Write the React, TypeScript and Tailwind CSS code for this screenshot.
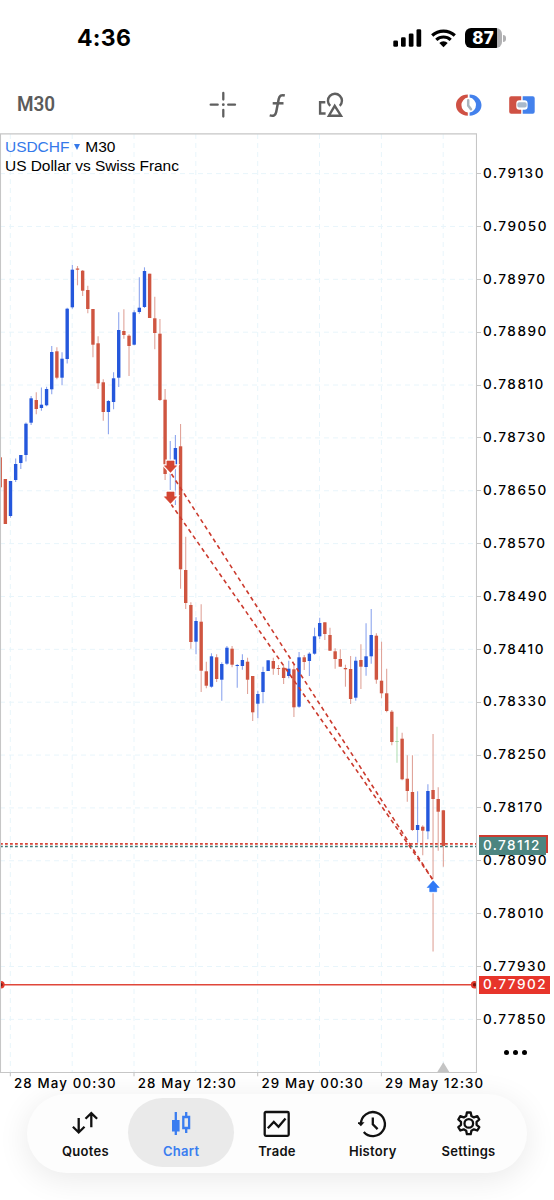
import type { ReactNode } from "react";

// [direction, body top, body bottom, high, low]
type Candle = ["u" | "d" | "n", number, number, number, number];

const CANDLE_STEP = 5.153;
const FIRST_X = 0.2;

const candles: Candle[] = [
  ["d", 457.3, 487.3, 457.3, 487.3],
  ["d", 479, 524, 479, 524],
  ["u", 481, 516, 481, 517.7],
  ["u", 464, 480, 458.5, 482],
  ["u", 455, 463, 455, 469],
  ["u", 423.7, 455, 422.5, 461.5],
  ["u", 398.3, 422.7, 396, 425],
  ["d", 400, 409, 392.3, 414.3],
  ["u", 404.7, 408, 387.5, 410.7],
  ["u", 389, 405.3, 386.7, 406.3],
  ["u", 352, 389.3, 346, 394.3],
  ["d", 351.3, 377.7, 347.3, 379.3],
  ["u", 358.7, 377.7, 352.3, 385.3],
  ["u", 308.7, 359, 307.7, 363.5],
  ["u", 269.7, 307.3, 265, 308.7],
  ["d", 268.5, 269.7, 266, 285.3],
  ["d", 270.7, 290.7, 270, 296],
  ["d", 290, 309, 285.7, 313.3],
  ["d", 309, 344.7, 309, 357.3],
  ["d", 343.3, 383.3, 336.3, 389],
  ["d", 382.3, 412, 379.3, 420.7],
  ["u", 401, 412, 400, 434.3],
  ["u", 378.3, 402, 372.3, 409.3],
  ["u", 330, 377.7, 312.3, 387],
  ["d", 331, 335, 309.3, 338.7],
  ["d", 335.7, 346, 334.3, 376],
  ["u", 312.3, 344.7, 310.3, 345.3],
  ["u", 307.7, 312, 277.3, 313.7],
  ["u", 271, 307, 267.3, 308],
  ["d", 273.7, 318, 273.7, 318],
  ["d", 318.3, 333, 296.7, 349.3],
  ["d", 333.7, 400, 319, 401],
  ["d", 399.7, 474, 389, 480],
  ["u", 464, 466, 441, 490],
  ["u", 448, 465, 435, 505],
  ["d", 446.3, 569.3, 424, 588.7],
  ["d", 570, 603, 536.7, 609],
  ["d", 605, 642, 602.3, 648.7],
  ["u", 621, 641.7, 617.3, 654.3],
  ["d", 621.7, 670.7, 604.3, 692],
  ["d", 671.3, 685.7, 661.7, 688.3],
  ["u", 656.3, 686.7, 653.3, 687.7],
  ["d", 657.3, 679, 654.3, 682],
  ["u", 664, 679.7, 662.3, 700.7],
  ["u", 647.7, 663.7, 646, 664.7],
  ["d", 648.7, 664.7, 646, 667.3],
  ["u", 665, 666, 664, 687.7],
  ["u", 660, 666, 654.3, 669.7],
  ["d", 661.7, 679.7, 657.7, 694],
  ["d", 676, 712.3, 676, 721],
  ["u", 694, 703.7, 690.7, 718.3],
  ["u", 672, 692, 666.7, 703.3],
  ["u", 660.3, 671, 660.3, 671],
  ["d", 661, 668.7, 657.7, 674.7],
  ["d", 668, 669, 665, 675],
  ["d", 667.7, 678, 665.3, 684],
  ["u", 668.7, 676, 660.7, 678.3],
  ["d", 669.3, 707.3, 664.7, 717],
  ["u", 657.3, 706.7, 652, 707.7],
  ["d", 657.3, 662, 655, 670],
  ["u", 653.7, 661, 652.3, 676],
  ["u", 636.3, 653.7, 627.7, 654.7],
  ["u", 623, 636.3, 617.7, 639],
  ["d", 622.3, 634, 622.3, 640],
  ["d", 635, 650.7, 627.7, 651],
  ["d", 651.3, 659, 648.3, 668.7],
  ["d", 659, 666.7, 649.3, 667],
  ["d", 668, 669.3, 664.7, 686.7],
  ["d", 669, 699, 656, 704],
  ["u", 660.7, 697.7, 656.7, 700.7],
  ["d", 660, 666.7, 644.3, 689],
  ["u", 656.3, 667, 623.3, 675.7],
  ["u", 635, 656.3, 609, 663.7],
  ["d", 635.7, 679.7, 633.3, 683.7],
  ["d", 680.7, 693.3, 641.7, 698.3],
  ["d", 693.3, 711, 668.7, 712.3],
  ["d", 711.7, 742, 710, 745.3],
  ["n", 741, 742, 726.7, 762.7],
  ["d", 738.7, 779.3, 732.7, 780.3],
  ["d", 778.7, 791, 755.3, 801.7],
  ["d", 792, 830, 755.3, 831],
  ["u", 825, 830, 791.3, 842.7],
  ["d", 826.7, 830.7, 825.3, 855.3],
  ["u", 791, 831.3, 784.3, 839.3],
  ["d", 790, 799, 734, 951.5],
  ["d", 799, 811.7, 787.3, 850.7],
  ["d", 810.3, 846, 810.3, 866.7],
];

const prices = [
  "0.79130", "0.79050", "0.78970", "0.78890", "0.78810", "0.78730",
  "0.78650", "0.78570", "0.78490", "0.78410", "0.78330", "0.78250",
  "0.78170", "0.78090", "0.78010", "0.77930", "0.77850",
];

const times = ["28 May 00:30", "28 May 12:30", "29 May 00:30", "29 May 12:30"];

const gridX = [10.3, 72.2, 134, 195.8, 257.7, 319.5, 381.4, 443.2];

const bodyColor = { u: "#2457dc", d: "#cf5540", n: "#9fd6a3" };
const wickColor = { u: "#8ea6ee", d: "#e0a49a", n: "#b4dfb6" };

function StatusBar() {
  return (
    <div className="flex h-[76px] shrink-0 items-center pl-[77px]">
      <span className="w-[316px] text-[23px] leading-none font-bold tracking-[0.3px]">
        4:36
      </span>
      <svg width="30" height="20" viewBox="0 0 30 20">
        <rect x="0.3" y="12.5" width="4.7" height="6.3" rx="1.3" />
        <rect x="8" y="9.2" width="4.7" height="9.6" rx="1.3" />
        <rect x="15.8" y="5.4" width="4.7" height="13.4" rx="1.3" />
        <rect x="23.5" y="1.2" width="4.7" height="17.6" rx="1.3" />
      </svg>
      <svg width="26" height="20" viewBox="0 0 26 20" className="ml-[8px]">
        <g fill="none" stroke="#000" strokeWidth="3.2">
          <path d="M1.2 7.5a16.600 16.600 0 0 1 22.600 0" />
          <path d="M5.300 11.800a10.600 10.600 0 0 1 14.400 0" />
        </g>
        <path d="M12.500 19.200 8.300 15a6 6 0 0 1 8.400 0z" />
      </svg>
      <div className="ml-[8px] flex items-center">
        <div className="flex h-[20px] w-[37px] items-center justify-center overflow-hidden rounded-[6px] bg-[linear-gradient(90deg,#000_86%,#b0b0b2_86%)] pr-[1px] text-[17px] leading-none font-extrabold text-white">
          87
        </div>
        <div className="ml-[1px] h-[7px] w-[2.5px] rounded-r-full bg-[#b0b0b2]" />
      </div>
    </div>
  );
}

function Toolbar() {
  return (
    <div className="flex h-[57px] shrink-0 items-center pl-[17px]">
      <span className="w-[192px] origin-left scale-x-90 font-[Roboto] text-[21px] leading-none font-semibold text-[#5b5b5b]">
        M30
      </span>
      <svg width="28" height="28" viewBox="0 0 28 28" className="text-[#5f5f5f]">
        <g fill="none" stroke="currentColor" strokeWidth="2.3" strokeLinecap="round">
          <path d="M14.3 2v6.500M14.3 19v6.500M1.700 13.700h7M19.200 13.700h6.800" />
        </g>
        <circle cx="14.300" cy="13.700" r="1.400" fill="currentColor" />
      </svg>
      <svg width="20" height="28" viewBox="0 0 20 28" className="ml-[30px] text-[#5f5f5f]">
        <g fill="none" stroke="currentColor" strokeWidth="2.500">
          <path d="M17.800 4.500c-3.600-.9-5.400.2-6.100 3.600L9.200 21c-.7 3.400-2.600 4.400-6.500 3.400" />
          <path d="M5.700 12.300h10.800" />
        </g>
      </svg>
      <svg width="28" height="28" viewBox="0 0 28 28" className="ml-[30px] text-[#5f5f5f]">
        <g fill="none" stroke="currentColor" strokeWidth="2.400">
          <path d="M13.200 14.900a7 7 0 1 1 9.600-.1" />
          <path d="M8.300 11.300H3.100v11.200h5.500" />
          <path d="M17.700 14.800 11.900 24.700H24z" />
        </g>
      </svg>
      <svg width="28" height="24" viewBox="0 0 28 24" className="ml-[110px]">
        <path d="M12.800 1.400C6 1.400 1 6.200 1 12.100s5 10.700 11.800 10.700v-3.200a7.600 7.600 0 0 1 0-15z" fill="#cf5144" />
        <path d="M14.600 1.400c6.800 0 11.900 4.800 11.900 10.700s-5.100 10.700-11.900 10.700v-3.200a7.600 7.600 0 0 0 0-15z" fill="#4381ec" />
        <path d="M13.200 7.300v5.200l2.800 3.800" fill="none" stroke="#a9b4bd" strokeWidth="2.500" strokeLinecap="round" />
      </svg>
      <svg width="28" height="24" viewBox="0 0 28 24" className="ml-[25px]">
        <path d="M3.200 3.200H13.200v4.100h-1.900a3 3 0 0 0-3 3v3.400a3 3 0 0 0 3 3h1.900v4.100H3.200a2 2 0 0 1-2-2V5.200a2 2 0 0 1 2-2z" fill="#cf5144" />
        <path d="M14.700 3.200h10a2 2 0 0 1 2 2v13.600a2 2 0 0 1-2 2h-10v-4.100h1.900a3 3 0 0 0 3-3v-3.400a3 3 0 0 0-3-3h-1.900z" fill="#4381ec" />
        <rect x="9.300" y="9.300" width="9.400" height="5.300" rx="1.800" fill="#a9b9cb" />
      </svg>
    </div>
  );
}

function Plot() {
  return (
    <svg width="477" height="944" viewBox="0 133 477 944" className="block shrink-0">
      <g stroke="#e8f5fb" strokeWidth="1" strokeDasharray="5 4">
        {gridX.map((x) => (
          <line key={x} x1={x} x2={x} y1="134" y2="1072" />
        ))}
        {prices.map((p, i) => (
          <line key={p} x1="0" x2="476" y1={173.6 + i * 52.86} y2={173.6 + i * 52.86} />
        ))}
      </g>

      {candles.map(([dir, top, bottom, high, low], i) => {
        const x = FIRST_X + i * CANDLE_STEP;
        return (
          <g key={i}>
            <line x1={x} x2={x} y1={high} y2={low} stroke={wickColor[dir]} strokeWidth="1.1" />
            <rect x={x - 1.7} y={top} width="3.4" height={bottom - top} fill={bodyColor[dir]} />
          </g>
        );
      })}

      {/* closed deals */}
      <g stroke="#cb3a2d" strokeWidth="1.6" strokeDasharray="4.2 3.5">
        <line x1="171.5" y1="474" x2="433" y2="880" />
        <line x1="171" y1="504" x2="433" y2="880" />
      </g>
      <g fill="none" stroke="#fff" strokeWidth="3">
        <path d="M166.900 461h7.200v4.800h2.500l-6.100 6.600-6.100-6.600h2.500z" />
        <path d="M166.900 492h7.200v4.800h2.500l-6.100 6.600-6.100-6.600h2.500z" />
        <path d="M429.700 891.700h7v-4.200h2.500l-6-6.700-6 6.700h2.500z" />
      </g>
      <g fill="#d34532" stroke="#d34532" strokeWidth="0.6">
        <path d="M166.900 461h7.200v4.800h2.500l-6.100 6.600-6.100-6.600h2.500z" />
        <path d="M166.900 492h7.200v4.800h2.500l-6.100 6.600-6.100-6.600h2.500z" />
      </g>
      <path
        d="M429.700 891.700h7v-4.200h2.500l-6-6.700-6 6.700h2.500z"
        fill="#2f79f6"
        stroke="#2f79f6"
        strokeWidth="0.6"
      />

      {/* ask / bid */}
      <line x1="0" x2="476" y1="843.9" y2="843.9" stroke="#d8463a" strokeWidth="1.6" strokeDasharray="2.8 2.2" />
      <line x1="0" x2="476" y1="846.4" y2="846.4" stroke="#3f7a76" strokeWidth="1.5" strokeDasharray="2.8 2.2" />

      {/* stop level */}
      <line x1="0" x2="476" y1="984.8" y2="984.8" stroke="#e0473a" strokeWidth="1.4" />
      <g fill="#7a120c" stroke="#e33a2d" strokeWidth="2">
        <circle cx="1" cy="984.8" r="2.7" />
        <circle cx="474.600" cy="984.8" r="2.7" />
      </g>

      <path d="M443.3 1062.3l6 9.7h-12z" fill="#c4c4c4" />
      <path d="M0.5 1072.500V133.900H476.500V1072.500z" fill="none" stroke="#c6c6c6" strokeWidth="1.1" />
      {[10.3, 134, 257.7, 381.4].map((x) => (
        <line key={x} x1={x} x2={x} y1="1073" y2="1076.300" stroke="#c0c0c0" />
      ))}
    </svg>
  );
}

function PriceAxis() {
  return (
    <div className="relative flex-1 pt-[14.2px]">
      {prices.map((p) => (
        <div key={p} className="flex h-[52.86px] items-center">
          <span className="h-px w-[4px] bg-[#c6c6c6]" />
          <span className="ml-[2px] text-[13.6px] leading-none font-medium tracking-[1.5px]">
            {p}
          </span>
        </div>
      ))}
      <div className="absolute top-[702px] left-[2px] h-[18px] w-[68.500px] bg-[#cc3b30]" />
      <div className="absolute top-[704px] left-[2px] flex h-[18px] w-[67px] items-center bg-[#4c8580] pl-[4px] text-[13.6px] leading-none font-medium tracking-[1.4px] text-white">
        0.78112
      </div>
      <div className="absolute top-[843px] left-[2px] flex h-[18px] w-[71px] items-center bg-[#e7352b] pl-[4px] text-[13.6px] leading-none font-medium tracking-[1.5px] text-white">
        0.77902
      </div>
      <div className="absolute top-[916.500px] left-[26.500px] flex gap-[4px]">
        <i className="size-[5px] rounded-full bg-black" />
        <i className="size-[5px] rounded-full bg-black" />
        <i className="size-[5px] rounded-full bg-black" />
      </div>
    </div>
  );
}

function NavItem({ label, active, children }: { label: string; active?: boolean; children: ReactNode }) {
  return (
    <button
      className={`relative flex w-[95.8px] flex-col items-center pt-[15px] ${active ? "text-[#3a7df0]" : "text-[#111]"}`}
    >
      {active && (
        <span className="absolute -inset-x-[5px] top-[4px] h-[69px] rounded-full bg-[#eaeaea]" />
      )}
      <svg
        width="30"
        height="30"
        viewBox="0 0 30 30"
        fill="none"
        stroke="currentColor"
        strokeWidth="2.3"
        className="relative"
      >
        {children}
      </svg>
      <span className="relative mt-[4px] text-[13px] leading-[16px] font-semibold tracking-[0.3px]">
        {label}
      </span>
    </button>
  );
}

function NavBar() {
  return (
    <nav className="relative mx-[27px] mt-[4px] flex h-[78.5px] shrink-0 justify-center rounded-full bg-[#fdfdfd] shadow-[0_6px_32px_rgba(0,0,0,0.09)]">
      <NavItem label="Quotes">
        <path d="M8.700 9v14M2.900 17.800l5.800 5.700 5.800-5.700M21.300 18.300V4.300M15.500 9.800l5.800-5.700 5.800 5.700" />
      </NavItem>
      <NavItem label="Chart" active>
        <path d="M9.8 3v23" />
        <path d="M6 11h7.6v11.500H6z" fill="currentColor" stroke="none" />
        <path d="M20.2 3v5M20.2 19v5" />
        <path d="M17.300 8h5.800v11h-5.800z" />
      </NavItem>
      <NavItem label="Trade">
        <rect x="2.700" y="3" width="24" height="23.800" rx="1.200" />
        <path d="M5.800 19.300l6-6.300 4.700 4.700 7-8.200" />
      </NavItem>
      <NavItem label="History">
        <path d="M3.700 14.800A12 12 0 1 1 6.600 22.900" transform="translate(-0.800 0)" />
        <path d="M-0.800 13.300h7.300l-3.600 4z" fill="currentColor" stroke="none" />
        <path d="M14.800 8.500v6.800l4.800 4.800" />
      </NavItem>
      <NavItem label="Settings">
        <g strokeLinejoin="round">
          <path d="M12.900 3.500h3.800l.7 3.500 2.500 1.400 3.400-1.200 2 3.300-2.700 2.400v2.900l2.700 2.300-2 3.400-3.400-1.200-2.500 1.400-.7 3.500h-3.800l-.7-3.500-2.500-1.400-3.400 1.200-2-3.400 2.700-2.300v-2.900l-2.700-2.400 2-3.300 3.400 1.200 2.500-1.400z" />
          <circle cx="14.800" cy="14.400" r="4.300" />
        </g>
      </NavItem>
    </nav>
  );
}

export default function App() {
  return (
    <div className="flex h-[1200px] w-[554px] flex-col overflow-hidden bg-white font-[Inter,sans-serif] text-black">
      <StatusBar />
      <Toolbar />
      <main className="relative flex h-[944px] shrink-0">
        <Plot />
        <PriceAxis />
        <div className="absolute top-[4px] left-[5px] font-['Liberation_Sans',sans-serif] text-[15.5px] leading-[19px] tracking-[-0.04px]">
          <div className="flex items-center">
            <span className="text-[#3579ea]">USDCHF</span>
            <span className="mx-[5px] size-0 border-x-[3px] border-t-[6px] border-x-transparent border-t-[#3579ea]" />
            <span>M30</span>
          </div>
          <div>US Dollar vs Swiss Franc</div>
        </div>
      </main>
      <div className="flex h-[13px] shrink-0 pl-[14px]">
        {times.map((t) => (
          <span
            key={t}
            className="w-[123.7px] shrink-0 text-[13.3px] leading-[13px] font-medium tracking-[1.15px] whitespace-nowrap"
          >
            {t}
          </span>
        ))}
      </div>
      <NavBar />
    </div>
  );
}
